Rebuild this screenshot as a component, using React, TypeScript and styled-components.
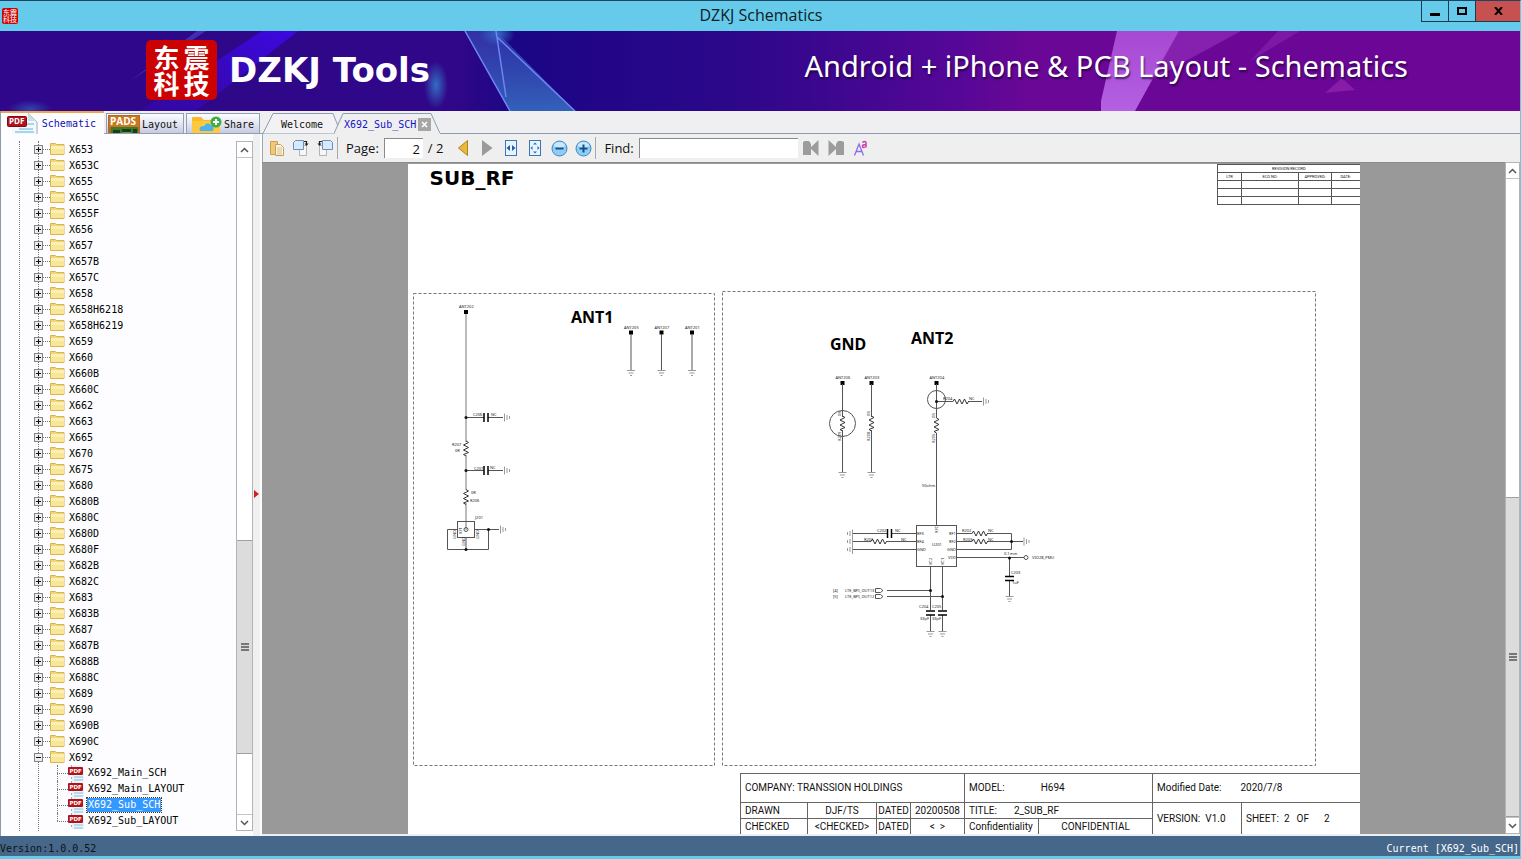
import React from "react";
import styled, { createGlobalStyle, css } from "styled-components";

const mono = `"DejaVu Sans Mono", "Liberation Mono", monospace`;
const ui = `"Open Sans", "Noto Sans", sans-serif`;
const sheetFont = `Roboto, "Noto Sans", sans-serif`;

const Global = createGlobalStyle`
  * { box-sizing: border-box; }
  html, body { margin: 0; padding: 0; overflow: hidden; }
  button, input { font: inherit; color: inherit; }
`;

const Window = styled.div`
  display: flex;
  flex-direction: column;
  height: 100vh;
  background: #66cbea;
  border-top: 1px solid #1b4560;
  border-right: 1px solid #66cbea;
  padding-bottom: 3px;
  overflow: hidden;
  font-family: ${ui};
`;

/* ---------- title bar ---------- */
const TitleBar = styled.header`
  display: grid;
  grid-template-columns: 1fr auto 1fr;
  height: 30px;
  flex: none;
  padding-left: 2px;
  color: #0d1c26;
`;
const TitleText = styled.h1`
  margin: 0;
  font-size: 16px;
  font-weight: 400;
  line-height: 28px;
`;
const WindowButtons = styled.div`
  justify-self: end;
  display: flex;
  height: 21px;
  border: 1px solid #1d3a4a;
  border-top: 0;
  border-right: 0;
`;
const WindowButton = styled.button<{ $close?: boolean }>`
  display: flex;
  align-items: center;
  justify-content: center;
  width: ${(p) => (p.$close ? 44 : 27)}px;
  padding: 0;
  border: 0;
  border-right: ${(p) => (p.$close ? "0" : "1px solid #1d3a4a")};
  background: ${(p) => (p.$close ? "#c75050" : "transparent")};
`;
const Seal = styled.div<{ $small?: boolean }>`
  position: relative;
  display: grid;
  grid-template-columns: auto auto;
  place-content: center;
  align-self: center;
  width: ${(p) => (p.$small ? 16 : 71)}px;
  height: ${(p) => (p.$small ? 16 : 60)}px;
  border-radius: ${(p) => (p.$small ? 2 : 5)}px;
  background: #cc0202;
  color: #fff;
  font-family: "Noto Sans CJK SC", sans-serif;
  font-weight: ${(p) => (p.$small ? 400 : 700)};
  font-size: ${(p) => (p.$small ? 7 : 26)}px;
  line-height: ${(p) => (p.$small ? 7 : 26)}px;
  column-gap: ${(p) => (p.$small ? 0 : 4)}px;
`;

/* ---------- banner ---------- */
const Banner = styled.div`
  position: relative;
  display: flex;
  align-items: center;
  height: 80px;
  flex: none;
  padding: 0 112px 2px 146px;
  color: #fff;
  background: linear-gradient(90deg, #2f078a 0%, #2f0788 30%, #1b0685 34%, #2c078a 48%, #3b078e 54%, #560797 63%, #6b0796 68%, #6b0696 100%);
`;
const BannerArt = styled.svg`
  position: absolute;
  inset: 0;
  width: 100%;
  height: 100%;
`;
const Brand = styled.div`
  position: relative;
  margin-left: 12px;
  font-family: "DejaVu Sans", sans-serif;
  font-size: 34px;
  line-height: 40px;
  font-weight: 700;
`;
const Slogan = styled.div`
  position: relative;
  margin-left: auto;
  padding-bottom: 8px;
  font-family: "Noto Sans", sans-serif;
  font-size: 29px;
  line-height: 36px;
  white-space: nowrap;
  text-shadow: 1px 2px 2px rgba(20, 0, 50, 0.7);
`;

/* ---------- body ---------- */
const Body = styled.div`
  display: flex;
  flex: 1;
  min-height: 0;
  background: #efeff1;
  font-family: ${mono};
`;
const Side = styled.aside`
  display: flex;
  flex-direction: column;
  width: 253px;
  flex: none;
  border-left: 1px solid #8d9bab;
`;
const SideTabs = styled.div`
  display: flex;
  align-items: flex-end;
  gap: 2px;
  width: 261px;
  height: 23px;
  flex: none;
  border-bottom: 1px solid #8fa0b5;
`;
const SideTab = styled.button<{ $active?: boolean; $w: number }>`
  display: flex;
  align-items: center;
  justify-content: space-between;
  width: ${(p) => p.$w}px;
  height: 20px;
  padding: 2px 5px 0 1px;
  overflow: hidden;
  font-size: 10px;
  border: 1px solid #8fa0b5;
  border-bottom: 0;
  background: linear-gradient(#fdfdff, #e4e6f2 50%, #c8cbdf);
  color: #111;
  ${(p) =>
    p.$active &&
    css`
      height: 23px;
      margin-bottom: -1px;
      padding: 0 8px 0 5px;
      border: 0;
      border-top: 2px solid #f0a54a;
      background: #fdfdff;
      color: #1010b4;
    `}
`;
const TreePane = styled.div`
  display: flex;
  flex: 1;
  min-height: 0;
  padding: 7px 0 5px;
  background: #fdfdff;
`;
const Tree = styled.nav`
  flex: 1;
  overflow: hidden;
  font-size: 10px;
`;
const Branch = styled.div`
  margin-left: 18px;
  border-left: 1px dotted #777;
`;
const Level = styled.ul<{ $line?: boolean }>`
  list-style: none;
  margin: 0 0 0 18px;
  padding: 0;
  ${(p) => p.$line && "border-left: 1px dotted #777;"}
`;
const Row = styled.div`
  display: flex;
  align-items: center;
  height: 16px;
  margin-left: -5px;
  white-space: nowrap;
`;
const Toggle = styled.button`
  display: block;
  width: 9px;
  height: 9px;
  padding: 0;
  border: 1px solid #848484;
  background: #ececec;
  line-height: 0;
`;
const Dots = styled.span<{ $w: number }>`
  width: ${(p) => p.$w}px;
  border-top: 1px dotted #777;
`;
const Label = styled.span`
  padding: 1px 0 0 4px;
  line-height: 15px;
  color: #000;
`;
const Leaf = styled.li<{ $last?: boolean }>`
  position: relative;
  display: flex;
  align-items: center;
  height: 16px;
  &::before {
    content: "";
    position: absolute;
    left: 0;
    top: 0;
    height: ${(p) => (p.$last ? 8 : 16)}px;
    border-left: 1px dotted #777;
  }
`;
const LeafLink = styled.a<{ $on?: boolean }>`
  margin-left: 2px;
  padding: 0 1px;
  line-height: 14px;
  color: ${(p) => (p.$on ? "#fff" : "#000")};
  background: ${(p) => (p.$on ? "#3399ff" : "transparent")};
  outline: ${(p) => (p.$on ? "1px dotted #4a3a20" : "0")};
  text-decoration: none;
  white-space: nowrap;
`;

/* ---------- scroll bars ---------- */
const Scroll = styled.div<{ $w: number }>`
  display: flex;
  flex-direction: column;
  width: ${(p) => p.$w}px;
  flex: none;
  background: #fff;
  border: 1px solid #b4b4b4;
`;
const ScrollButton = styled.button`
  display: flex;
  align-items: center;
  justify-content: center;
  height: 16px;
  flex: none;
  padding: 0;
  border: 0;
  background: #fff;
  border-bottom: 1px solid #c4c4c4;
  &:last-child { border-bottom: 0; border-top: 1px solid #c4c4c4; }
`;
const Track = styled.div<{ $grow: number }>`
  flex: ${(p) => p.$grow};
`;
const Thumb = styled.div<{ $grow: number }>`
  display: flex;
  flex-direction: column;
  align-items: center;
  justify-content: center;
  flex: ${(p) => p.$grow};
  background: #dcdcdc;
  border-top: 1px solid #a0a0a0;
  border-bottom: 1px solid #a0a0a0;
`;
const Splitter = styled.div`
  display: flex;
  align-items: center;
  width: 9px;
  flex: none;
  margin-top: 23px;
  padding: 18px 0 0 1px;
  background: #eff0f2;
  border-right: 2px solid #fcfcfc;
`;

/* ---------- document area ---------- */
const Main = styled.main`
  display: flex;
  flex-direction: column;
  flex: 1;
  min-width: 0;
`;
const DocTabs = styled.div`
  display: flex;
  align-items: flex-end;
  height: 23px;
  flex: none;
  border-bottom: 1px solid #8b9dae;
`;
const DocTab = styled.div<{ $w: number; $active?: boolean }>`
  position: relative;
  display: flex;
  align-items: center;
  width: ${(p) => p.$w}px;
  height: 21px;
  margin-bottom: -1px;
  margin-left: ${(p) => (p.$active ? -8 : 0)}px;
  padding: 2px 0 0 ${(p) => (p.$active ? 10 : 19)}px;
  font-size: 10px;
  color: ${(p) => (p.$active ? "#1414c8" : "#111")};
  & > svg { position: absolute; left: 0; top: 0; }
`;
const TabName = styled.button`
  position: relative;
  padding: 0;
  border: 0;
  background: none;
`;
const TabClose = styled.button`
  position: relative;
  display: flex;
  align-items: center;
  justify-content: center;
  width: 13px;
  height: 13px;
  margin-left: 2px;
  padding: 0;
  border: 0;
  background: #a6a6a6;
`;
const Toolbar = styled.div`
  display: flex;
  align-items: center;
  height: 28px;
  flex: none;
  padding-left: 2px;
  background: #efefef;
  border-left: 1px solid #a0a8b0;
  font-family: ${ui};
  font-size: 13px;
  color: #111;
`;
const Tool = styled.button`
  display: flex;
  align-items: center;
  justify-content: center;
  width: 24px;
  height: 22px;
  flex: none;
  padding: 0;
  border: 0;
  background: none;
`;
const Divider = styled.span`
  width: 1px;
  height: 22px;
  margin-right: 8px;
  background: #a8a8a8;
`;
const Field = styled.input<{ $w: number }>`
  width: ${(p) => p.$w}px;
  height: 20px;
  margin: 0 5px;
  padding: 0 3px 0 2px;
  border: 0;
  border-top: 1px solid #8a8a8a;
  border-left: 1px solid #8a8a8a;
  background: #fff;
  text-align: right;
`;
const Tools = styled.div`
  display: flex;
  margin-left: 8px;
`;
const FindTools = styled.div`
  display: flex;
  gap: 1px;
  margin-left: -4px;
`;
const Viewer = styled.div`
  display: flex;
  flex: 1;
  min-height: 0;
  margin-bottom: 2px;
  background: #999;
`;
const Canvas = styled.div`
  flex: 1;
  min-width: 0;
  padding-top: 1px;
  border-top: 1px solid #8c8c8c;
  overflow: hidden;
`;
const Sheet = styled.article`
  width: 952px;
  height: 100%;
  margin: 0 auto;
  background: #fff;
  overflow: hidden;
  font-family: ${sheetFont};
  color: #111;
`;
const SheetHead = styled.div`
  display: flex;
  justify-content: space-between;
  align-items: flex-start;
  height: 127px;
  padding-left: 22px;
`;
const SheetTitle = styled.h2`
  margin: 0;
  font: 700 20px/28px "DejaVu Sans", sans-serif;
  color: #000;
`;
const Revision = styled.table`
  width: 142px;
  border-collapse: collapse;
  table-layout: fixed;
  font-size: 4px;
  line-height: 7px;
  text-align: center;
  td, th {
    height: 8px;
    padding: 0;
    font-weight: 400;
    border: 1px solid #555;
    border-right-width: 0;
  }
`;
const Frames = styled.div`
  display: flex;
  align-items: flex-end;
  gap: 7px;
  padding-left: 5px;
`;
const Drawing = styled.svg`
  display: block;
  flex: none;
`;
const TitleBlock = styled.table`
  width: 619px;
  margin: 7px 0 0 auto;
  border-collapse: collapse;
  table-layout: fixed;
  font-size: 10px;
  line-height: 14px;
  text-align: left;
  td {
    height: 16px;
    padding: 0 0 0 4px;
    border: 1px solid #666;
    border-right-width: 0;
    white-space: nowrap;
    overflow: hidden;
  }
  tr:first-child td { height: 29px; }
`;
const CenterCell = styled.td`
  && { padding: 0; text-align: center; }
`;
const Gap = styled.span<{ $w: number }>`
  display: inline-block;
  width: ${(p) => p.$w}px;
`;
const Status = styled.footer`
  display: flex;
  justify-content: space-between;
  align-items: flex-end;
  height: 20px;
  flex: none;
  padding: 0 1px 0 0;
  background: #44678a;
  font: 10px/14px ${mono};
  color: #111;
`;
const Current = styled.span`
  color: #fff;
`;

/* ---------- icons ---------- */
const Folder = () => (
  <svg width="15" height="14" viewBox="0 0 15 14">
    <path d="M.5 1.500h5l1 1h7.500v10H.5z" fill="#f3d775" stroke="#d9b452" />
    <path d="M1 4h13v8H1z" fill="#fae694" />
    <path d="M1 4h13v3H1z" fill="#fdf0b4" />
  </svg>
);
const PdfIcon = () => (
  <svg width="17" height="16" viewBox="0 0 17 16">
    <path d="M4 0h8l4 4v12H4z" fill="#e9f3f8" />
    <path d="M3.500 0v16" stroke="#9ab" strokeDasharray="2 2" />
    <path d="M6 12h9M6 15h9" stroke="#a5d4ea" strokeWidth="1.500" />
    <rect x="0" y="2" width="15" height="8" rx="1" fill="#b3121d" />
    <text x="1.500" y="8" fontSize="5.500" fontWeight="700" fill="#fff" fontFamily="DejaVu Sans">PDF</text>
  </svg>
);
const BigPdf = () => (
  <svg width="33" height="21" viewBox="0 0 33 21">
    <path d="M6 0h16l8 8v13H6z" fill="#f2f8fc" />
    <path d="M22 0l9 9v12" fill="none" stroke="#8eaec0" />
    <path d="M22 0v8h8z" fill="#c9dfe9" />
    <path d="M13 16h14M9 19h19M21 11h7" stroke="#a9d5ec" strokeWidth="2" />
    <rect x="1.500" y="3.500" width="19" height="10" rx="1" fill="#b3121d" stroke="#7d0c14" />
    <text x="3" y="11" fontSize="8" fontWeight="700" fill="#fff" fontFamily="Open Sans">PDF</text>
  </svg>
);
const PadsIcon = () => (
  <svg width="32" height="19" viewBox="0 0 32 19">
    <rect width="32" height="19" fill="#b9671c" />
    <rect x="1" y="1" width="30" height="11" fill="#c97820" />
    <text x="2" y="10" fontSize="10" fontWeight="700" fill="#fff" fontFamily="Open Sans">PADS</text>
    <path d="M3 12h27v7H3z" fill="#3d7a25" />
    <path d="M5 15h7v4H5zM14 14h9v3h-9zM25 14h4v5h-4z" fill="#1d3a20" />
    <path d="M14 18h9" stroke="#7cc04a" />
  </svg>
);
const ShareIcon = () => (
  <svg width="34" height="18" viewBox="0 0 34 18">
    <path d="M4 2q0-1 1-1h8l3 3h14v14H4z" fill="#fbb92a" />
    <path d="M4 5h28v13H4z" fill="#ffc93f" />
    <path d="M12 15q-2-5 4-5 3-5 7-1 4 1 2 6z" fill="#4db3ec" />
    <circle cx="28" cy="6" r="5.500" fill="#3fae49" />
    <path d="M28 3v6M25 6h6" stroke="#fff" strokeWidth="2" />
  </svg>
);
const Chevron = ({ up }: { up?: boolean }) => (
  <svg width="9" height="6" viewBox="0 0 9 6">
    <path d={up ? "M1 5l3.500-3.500L8 5" : "M1 1l3.500 3.500L8 1"} fill="none" stroke="#555" strokeWidth="1.500" />
  </svg>
);
const Grip = () => (
  <svg width="8" height="8" viewBox="0 0 8 8">
    <path d="M0 1h8M0 4h8M0 7h8" stroke="#555" strokeWidth="1.500" />
  </svg>
);
const CopyIcon = () => (
  <svg width="17" height="17" viewBox="0 0 17 17">
    <path d="M1.500 1.500h7v13h-7z" fill="#f0c878" stroke="#cfa04c" />
    <path d="M6.500 4.500h5l3 3v8h-8z" fill="#fff6e0" stroke="#c79f58" />
    <path d="M8 8h5M8 10h5M8 12h5M8 14h5" stroke="#b9a67c" strokeWidth=".7" />
  </svg>
);
const RotateIcon = ({ left }: { left?: boolean }) => (
  <svg width="18" height="18" viewBox="0 0 18 18">
    <g transform={left ? "matrix(-1 0 0 1 18 0)" : undefined}>
      <path d="M7.500 6.500h7v10h-7z" fill="#f7f7f7" stroke="#b4b4b4" />
      <path d="M1.500 3.500l2-2h8v9h-10z" fill="#d6eafb" stroke="#6a90b8" />
      <path d="M12 2.500h2.500V5" fill="none" stroke="#222" strokeWidth="1.200" />
      <path d="M12.500 4.500h4L14.500 7z" fill="#222" />
    </g>
  </svg>
);
const FitIcon = ({ page }: { page?: boolean }) => (
  <svg width="14" height="16" viewBox="0 0 14 16">
    <rect x="1.500" y=".5" width="11" height="15" fill="#e8f4ff" stroke="#3c74b8" />
    {page ? (
      <path d="M7 2.500l2 2H5zM7 13.500l2-2H5zM2.500 8l2-2v4zM11.500 8l-2-2v4z" fill="#2b6cb5" />
    ) : (
      <path d="M2.500 8L6 5v6zM11.500 8L8 5v6z" fill="#1d5fae" />
    )}
  </svg>
);
const ZoomIcon = ({ plus }: { plus?: boolean }) => (
  <svg width="17" height="17" viewBox="0 0 17 17">
    <circle cx="8.500" cy="8.500" r="7.500" fill="#8fcdf5" stroke="#3e87c4" />
    <ellipse cx="8.500" cy="5" rx="5.500" ry="3" fill="#c9e8fc" />
    <path d={plus ? "M4.500 8.500h8M8.500 4.500v8" : "M4.500 8.500h8"} stroke="#10508f" strokeWidth="2" />
  </svg>
);
const ArrowIcon = ({ back }: { back?: boolean }) => (
  <svg width="12" height="18" viewBox="0 0 12 18">
    {back ? (
      <path d="M10.500 1.500v15L1.500 9z" fill="#e9b93b" stroke="#b5811b" />
    ) : (
      <path d="M1 1v16L11.500 9z" fill="#9a9a9a" />
    )}
  </svg>
);
const FindIcon = ({ next }: { next?: boolean }) => (
  <svg width="16" height="16" viewBox="0 0 16 16">
    <g transform={next ? "matrix(-1 0 0 1 16 0)" : undefined} fill="#9c9c9c">
      <path d="M0 2l2-1h4l2 3v11H0z" />
      <path d="M15.500 0v16L7 8z" />
    </g>
  </svg>
);
const CaseIcon = () => (
  <svg width="16" height="18" viewBox="0 0 16 18">
    <path d="M1.500 16.500L6 5l4.500 11.500M3 12.500h6" fill="none" stroke="#8a6ee8" strokeWidth="1.300" />
    <path d="M9.500 3.500q2-2 3.500 0v5M13 5.500q-4 0-3.500 2t3.500 0" fill="none" stroke="#cf3fa8" strokeWidth="1.500" />
  </svg>
);

/* ---------- schematic symbols ---------- */
const line = { fill: "none", stroke: "#555", strokeWidth: 1 };
const T = ({ x, y, children, v }: { x: number; y: number; children: string; v?: boolean }) => (
  <text x={x} y={y} fontSize="4" fill="#222" fontFamily="Noto Sans" transform={v ? `rotate(-90 ${x} ${y})` : undefined}>
    {children}
  </text>
);
const Heading = ({ x, y, children }: { x: number; y: number; children: string }) => (
  <text x={x} y={y} fontSize="16" fontWeight="700" fill="#000" fontFamily="Noto Sans">{children}</text>
);
const Pin = ({ x, y, name }: { x: number; y: number; name: string }) => (
  <g>
    <rect x={x - 2} y={y} width="4" height="4" fill="#000" />
    <T x={x - 7} y={y - 2}>{name}</T>
  </g>
);
const Earth = ({ x, y }: { x: number; y: number }) => (
  <path d={`M${x - 4} ${y}h8M${x - 2.5} ${y + 2.5}h5M${x - 1} ${y + 5}h2`} {...line} stroke="#999" />
);
const SideEarth = ({ x, y, flip }: { x: number; y: number; flip?: boolean }) => {
  const d = flip ? -1 : 1;
  return <path d={`M${x} ${y - 4}v8M${x + 2.5 * d} ${y - 2.5}v5M${x + 5 * d} ${y - 1.5}v3`} {...line} stroke="#999" />;
};
const ResV = ({ x, y }: { x: number; y: number }) => (
  <path d={`M${x} ${y}l2.500 1.500l-5 2.500l5 2.500l-5 2.500l5 2.500l-5 2l2.500 1.500`} {...line} stroke="#333" />
);
const ResH = ({ x, y }: { x: number; y: number }) => (
  <path d={`M${x} ${y}l1.500-2.500l2.500 5l2.500-5l2.500 5l2.500-5l2.500 5l1.500-2.500`} {...line} stroke="#333" />
);
const CapH = ({ x, y }: { x: number; y: number }) => (
  <path d={`M${x - 2} ${y - 4.5}v9M${x + 2} ${y - 4.5}v9`} stroke="#000" strokeWidth="1.500" />
);
const CapV = ({ x, y }: { x: number; y: number }) => (
  <path d={`M${x - 4.5} ${y - 2}h9M${x - 4.5} ${y + 2}h9`} stroke="#000" strokeWidth="1.500" />
);
const Dot = ({ x, y }: { x: number; y: number }) => <circle cx={x} cy={y} r="1.500" fill="#111" />;

const Antenna1 = () => (
  <Drawing width="302" height="473" viewBox="413 293 302 473">
    <rect x="413.500" y="293.500" width="301" height="472" {...line} stroke="#777" strokeDasharray="3 2" />
    <Heading x={571} y={323}>ANT1</Heading>
    <Pin x={466} y={310} name="ANT202" />
    <path d="M466 314v128M466 455v35M466 503v27" {...line} stroke="#777" />
    <path d="M466 417.500h18M488 417.500h15M466 470.500h18M488 470.500h15" {...line} />
    <CapH x={486} y={417.5} />
    <CapH x={486} y={470.5} />
    <SideEarth x={504.5} y={417.5} />
    <SideEarth x={504.5} y={470.5} />
    <Dot x={466} y={417.5} />
    <Dot x={466} y={470.5} />
    <T x={473} y={416}>C206</T>
    <T x={491} y={416}>NC</T>
    <T x={474} y={470}>C207</T>
    <T x={490} y={469}>NC</T>
    <ResV x={466} y={441} />
    <ResV x={466} y={489.5} />
    <T x={452} y={446}>R207</T>
    <T x={455} y={452}>0R</T>
    <T x={471} y={494}>0R</T>
    <T x={470} y={502}>R206</T>
    <T x={475} y={519}>J201</T>
    <rect x="457.500" y="521.500" width="17" height="16" {...line} />
    <circle cx="466" cy="529.500" r="2" {...line} />
    <path d="M457 529.500h-9.500v20h41v-20M474 529.500h25M466 537v12" {...line} />
    <SideEarth x={500.5} y={529.5} />
    <Dot x={488.500} y={529.5} />
    <Dot x={466} y={549.500} />
    <T x={456} y={539} v>GND</T>
    <T x={479} y={539} v>GND</T>
    <T x={465} y={546} v>GND</T>
    <T x={462} y={534} v>RF1</T>
    {[["ANT205", 631], ["ANT207", 661.5], ["ANT201", 692]].map(([name, x]) => (
      <g key={name}>
        <Pin x={x as number} y={330.5} name={name as string} />
        <path d={`M${x} 334v36`} {...line} />
        <Earth x={x as number} y={370.5} />
      </g>
    ))}
  </Drawing>
);

const Antenna2 = () => (
  <Drawing width="594" height="475" viewBox="722 291 594 475">
    <rect x="722.500" y="291.500" width="593" height="474" {...line} stroke="#777" strokeDasharray="3 2" />
    <Heading x={830} y={350}>GND</Heading>
    <Heading x={911} y={344}>ANT2</Heading>
    <Pin x={842.500} y={381} name="ANT206" />
    <Pin x={871.500} y={381} name="ANT203" />
    <Pin x={936.500} y={381} name="ANT204" />
    <path d="M842.500 384v33M842.500 430v42M871.500 384v33M871.500 430v42M936.500 384v34M936.500 433v92" {...line} />
    <ResV x={842.500} y={416} />
    <ResV x={871.500} y={416} />
    <ResV x={936.500} y={418} />
    <circle cx="842.500" cy="423.500" r="13" {...line} />
    <circle cx="936.500" cy="399.500" r="9" {...line} />
    <Earth x={842.500} y={472.5} />
    <Earth x={871.500} y={472.5} />
    <T x={841} y={416} v>0R</T>
    <T x={841} y={441} v>R209</T>
    <T x={870} y={416} v>0R</T>
    <T x={870} y={441} v>R208</T>
    <T x={935} y={418} v>0R</T>
    <T x={935} y={443} v>R205</T>
    <path d="M936 401.500h17M968 401.500h14" {...line} />
    <ResH x={953} y={401.500} />
    <Dot x={936.500} y={401.500} />
    <SideEarth x={983.500} y={401.500} />
    <T x={943} y={400}>R204</T>
    <T x={969} y={400}>NC</T>
    <T x={922} y={487}>50ohm</T>
    <rect x="916.500" y="525.500" width="40" height="41" {...line} />
    <path d="M916 533.500h-25M887 533.500h-34M916 541.500h-30M871 541.500h-18M916 549.500h-63" {...line} />
    <CapH x={889.5} y={533.5} />
    <ResH x={871} y={541.5} />
    {[533.5, 541.5, 549.5].map((y) => <SideEarth key={y} x={852.500} y={y} flip />)}
    <path d="M852.500 530v24" {...line} stroke="#999" />
    <T x={877} y={532}>C202</T>
    <T x={895} y={532}>NC</T>
    <T x={864} y={541}>R201</T>
    <T x={901} y={541}>NC</T>
    <T x={917} y={535}>RF3</T>
    <T x={917} y={543}>RF4</T>
    <T x={917} y={551}>GND</T>
    <T x={949} y={535}>RF1</T>
    <T x={949} y={543}>RF2</T>
    <T x={947} y={551}>GND</T>
    <T x={948} y={559}>VDD</T>
    <T x={932} y={546}>U201</T>
    <T x={938} y={533} v>RFC</T>
    <T x={932} y={565} v>VC2</T>
    <T x={944} y={565} v>VC1</T>
    <path d="M957 533.500h15M987 533.500h24.500v16H957M957 541.500h15M987 541.500h36" {...line} />
    <ResH x={972} y={533.5} />
    <ResH x={972} y={541.5} />
    <Dot x={1011.5} y={541.5} />
    <SideEarth x={1024} y={541.5} />
    <T x={962} y={532}>R202</T>
    <T x={988} y={532}>NC</T>
    <T x={963} y={541}>R203</T>
    <T x={988} y={541}>NC</T>
    <path d="M957 557.500h67M1009.500 557v19M1009.500 580v16" {...line} />
    <circle cx="1026" cy="557.500" r="2" {...line} />
    <Dot x={1009.500} y={558} />
    <CapV x={1009.500} y={578.5} />
    <Earth x={1009.500} y={596.5} />
    <T x={1004} y={555}>0.1mm</T>
    <T x={1032} y={559}>VIO28_PMU</T>
    <T x={1011} y={574}>C203</T>
    <T x={1012} y={584}>1uF</T>
    <path d="M930.500 567v43M942.500 567v43M930.500 615v17M942.500 615v17M887 590.500h43M887 596.500h55" {...line} />
    <path d="M875.500 588.500h5l2.500 2l-2.500 2h-5zM875.500 594.500h5l2.500 2l-2.500 2h-5z" {...line} />
    <Dot x={930.500} y={590.500} />
    <Dot x={942.500} y={596.500} />
    <CapV x={930.500} y={613} />
    <CapV x={942.500} y={613} />
    <Earth x={930.500} y={631.5} />
    <Earth x={942.500} y={631.5} />
    <T x={833} y={592}>[4]</T>
    <T x={833} y={598}>[5]</T>
    <T x={845} y={592}>LTE_BPI_OUT13</T>
    <T x={845} y={598}>LTE_BPI_OUT12</T>
    <T x={919} y={608}>C204</T>
    <T x={932} y={608}>C205</T>
    <T x={920} y={620}>33pF</T>
    <T x={932} y={620}>33pF</T>
  </Drawing>
);

const models = (
  "X653 X653C X655 X655C X655F X656 X657 X657B X657C X658 X658H6218 X658H6219 X659 X660 X660B X660C X662 X663 X665 X670 " +
  "X675 X680 X680B X680C X680D X680F X682B X682C X683 X683B X687 X687B X688B X688C X689 X690 X690B X690C X692"
).split(" ");
const files = ["X692_Main_SCH", "X692_Main_LAYOUT", "X692_Sub_SCH", "X692_Sub_LAYOUT"];

const SealMark = ({ small }: { small?: boolean }) => (
  <Seal $small={small}>
    <span>东</span>
    <span>震</span>
    <span>科</span>
    <span>技</span>
  </Seal>
);

export default function App() {
  return (
    <Window>
      <Global />
      <TitleBar>
        <SealMark small />
        <TitleText>DZKJ Schematics</TitleText>
        <WindowButtons>
          <WindowButton aria-label="Minimize">
            <svg width="10" height="10"><path d="M0 8.500h10" stroke="#000" strokeWidth="3" /></svg>
          </WindowButton>
          <WindowButton aria-label="Maximize">
            <svg width="10" height="8"><rect x="1" y="1" width="8" height="6" fill="none" stroke="#000" strokeWidth="2" /></svg>
          </WindowButton>
          <WindowButton $close aria-label="Close">
            <svg width="9" height="8" viewBox="0 0 9 8"><path d="M1 0l7 8M8 0L1 8" stroke="#000" strokeWidth="2" /></svg>
          </WindowButton>
        </WindowButtons>
      </TitleBar>

      <Banner>
        <BannerArt viewBox="0 0 1520 80" preserveAspectRatio="none">
          <defs>
            <linearGradient id="beam" x1="0" y1="1" x2="1" y2="0">
              <stop offset="0" stopColor="#3a0ad0" stopOpacity="0.300" />
              <stop offset="1" stopColor="#3c08e0" />
            </linearGradient>
            <linearGradient id="shard" x1="0" y1="0" x2="0" y2="1">
              <stop offset="0" stopColor="#3c55c0" stopOpacity="0.700" />
              <stop offset="1" stopColor="#3a7fcb" />
            </linearGradient>
            <linearGradient id="pink" x1="0" y1="0" x2="0" y2="1">
              <stop offset="0" stopColor="#b254dc" />
              <stop offset="1" stopColor="#c070f0" />
            </linearGradient>
            <radialGradient id="glow">
              <stop offset="0" stopColor="#3478c8" stopOpacity="0.900" />
              <stop offset="1" stopColor="#3478c8" stopOpacity="0" />
            </radialGradient>
          </defs>
          <path d="M262 0h36L196 80H140z" fill="url(#beam)" />
          <path d="M197 0h9L130 50z" fill="#5a50d8" opacity="0.500" />
          <ellipse cx="30" cy="78" rx="22" ry="9" fill="url(#glow)" opacity="0.600" />
          <ellipse cx="436" cy="54" rx="12" ry="24" fill="url(#glow)" />
          <ellipse cx="497" cy="3" rx="18" ry="12" fill="url(#glow)" />
          <path d="M465 0h31l79 80h-65z" fill="url(#shard)" opacity="0.750" />
          <path d="M465 0l45 80M496 0l10 66M497 6l78 74" fill="none" stroke="#6d86f5" strokeWidth="1.500" />
          <path d="M1117 0h62l-44 80h-34v-10z" fill="url(#pink)" opacity="0.850" />
          <path d="M1179 0h62l-92 50z" fill="#9b35c4" opacity="0.550" />
          <path d="M1278 0h22l-50 30z" fill="#8b2bb5" opacity="0.500" />
          <path d="M1342 47l13 12l-30 3z" fill="#9226ae" opacity="0.700" />
        </BannerArt>
        <SealMark />
        <Brand>DZKJ Tools</Brand>
        <Slogan>Android + iPhone &amp; PCB Layout - Schematics</Slogan>
      </Banner>

      <Body>
        <Side>
          <SideTabs>
            <SideTab $w={103} $active><BigPdf />Schematic</SideTab>
            <SideTab $w={78}><PadsIcon />Layout</SideTab>
            <SideTab $w={74}><ShareIcon />Share</SideTab>
          </SideTabs>
          <TreePane>
            <Tree aria-label="Models">
              <Branch>
                <Level $line>
                  {models.map((m, i) => {
                    const open = i === models.length - 1;
                    return (
                      <li key={m}>
                        <Row>
                          <Toggle aria-label={open ? "Collapse " + m : "Expand " + m}>
                            <svg width="7" height="7"><path d={open ? "M1 3.500h5" : "M1 3.500h5M3.500 1v5"} stroke="#111" /></svg>
                          </Toggle>
                          <Dots $w={7} />
                          <Folder />
                          <Label>{m}</Label>
                        </Row>
                        {open && (
                          <Level>
                            {files.map((f, j) => (
                              <Leaf key={f} $last={j === 3}>
                                <Dots $w={11} />
                                <PdfIcon />
                                <LeafLink href="#" $on={j === 2}>{f}</LeafLink>
                              </Leaf>
                            ))}
                          </Level>
                        )}
                      </li>
                    );
                  })}
                  <li><Row><Gap $w={16} /><Folder /></Row></li>
                </Level>
              </Branch>
            </Tree>
            <Scroll $w={17}>
              <ScrollButton aria-label="Scroll up"><Chevron up /></ScrollButton>
              <Track $grow={384} />
              <Thumb $grow={214}><Grip /></Thumb>
              <Track $grow={60} />
              <ScrollButton aria-label="Scroll down"><Chevron /></ScrollButton>
            </Scroll>
          </TreePane>
        </Side>
        <Splitter>
          <svg width="5" height="8"><path d="M0 0l5 4l-5 4z" fill="#d02020" /></svg>
        </Splitter>

        <Main>
          <DocTabs>
            <DocTab $w={80}>
              <svg width="80" height="21"><path d="M1 20.500L11 .5h60l8 20" fill="#f2f2f4" stroke="#8b9dae" /></svg>
              <TabName>Welcome</TabName>
            </DocTab>
            <DocTab $w={108} $active>
              <svg width="108" height="21"><path d="M0 20.500L9 .5h88l9 20" fill="#efefef" stroke="#8b9dae" /><path d="M1 20.500h105" stroke="#efefef" /></svg>
              <TabName>X692_Sub_SCH</TabName>
              <TabClose aria-label="Close tab">
                <svg width="7" height="7"><path d="M1 1l5 5M6 1L1 6" stroke="#fff" strokeWidth="1.500" /></svg>
              </TabClose>
            </DocTab>
          </DocTabs>
          <Toolbar>
            <Tool aria-label="Copy"><CopyIcon /></Tool>
            <Tool aria-label="Rotate right"><RotateIcon /></Tool>
            <Tool aria-label="Rotate left"><RotateIcon left /></Tool>
            <Divider />
            <label htmlFor="page">Page:</label>
            <Field id="page" $w={39} defaultValue="2" />
            <span>/ 2</span>
            <Tools>
              <Tool aria-label="Previous page"><ArrowIcon back /></Tool>
              <Tool aria-label="Next page"><ArrowIcon /></Tool>
              <Tool aria-label="Fit width"><FitIcon /></Tool>
              <Tool aria-label="Fit page"><FitIcon page /></Tool>
              <Tool aria-label="Zoom out"><ZoomIcon /></Tool>
              <Tool aria-label="Zoom in"><ZoomIcon plus /></Tool>
            </Tools>
            <Divider />
            <label htmlFor="find">Find:</label>
            <Field id="find" $w={159} />
            <FindTools>
              <Tool aria-label="Find previous"><FindIcon /></Tool>
              <Tool aria-label="Find next"><FindIcon next /></Tool>
              <Tool aria-label="Match case"><CaseIcon /></Tool>
            </FindTools>
          </Toolbar>
          <Viewer>
            <Canvas>
              <Sheet>
                <SheetHead>
                  <SheetTitle>SUB_RF</SheetTitle>
                  <Revision>
                    <colgroup><col width="24" /><col width="57" /><col width="33" /><col width="28" /></colgroup>
                    <tbody>
                      <tr><th colSpan={4}>REVISION RECORD</th></tr>
                      <tr><th>LTR</th><th>ECO NO:</th><th>APPROVED:</th><th>DATE:</th></tr>
                      {[0, 1, 2].map((r) => <tr key={r}><td /><td /><td /><td /></tr>)}
                    </tbody>
                  </Revision>
                </SheetHead>
                <Frames>
                  <Antenna1 />
                  <Antenna2 />
                </Frames>
                <TitleBlock>
                  <colgroup>
                    <col width="67" /><col width="69" /><col width="34" /><col width="54" />
                    <col width="74" /><col width="114" /><col width="89" /><col width="118" />
                  </colgroup>
                  <tbody>
                    <tr>
                      <td colSpan={4}>COMPANY: TRANSSION HOLDINGS</td>
                      <td colSpan={2}>MODEL:<Gap $w={36} />H694</td>
                      <td colSpan={2}>Modified Date:<Gap $w={19} />2020/7/8</td>
                    </tr>
                    <tr>
                      <td>DRAWN</td>
                      <CenterCell>DJF/TS</CenterCell>
                      <CenterCell>DATED</CenterCell>
                      <CenterCell>20200508</CenterCell>
                      <td colSpan={2}>TITLE:<Gap $w={17} />2_SUB_RF</td>
                      <td rowSpan={2}>VERSION:<Gap $w={5} />V1.0</td>
                      <td rowSpan={2}>SHEET:<Gap $w={5} />2<Gap $w={7} />OF<Gap $w={15} />2</td>
                    </tr>
                    <tr>
                      <td>CHECKED</td>
                      <CenterCell>&lt;CHECKED&gt;</CenterCell>
                      <CenterCell>DATED</CenterCell>
                      <CenterCell>&lt;&nbsp; &gt;</CenterCell>
                      <td>Confidentiality</td>
                      <CenterCell>CONFIDENTIAL</CenterCell>
                    </tr>
                  </tbody>
                </TitleBlock>
              </Sheet>
            </Canvas>
            <Scroll $w={15}>
              <ScrollButton aria-label="Scroll up"><Chevron up /></ScrollButton>
              <Track $grow={320} />
              <Thumb $grow={321}><Grip /></Thumb>
              <ScrollButton aria-label="Scroll down"><Chevron /></ScrollButton>
            </Scroll>
          </Viewer>
        </Main>
      </Body>
      <Status>
        <span>Version:1.0.0.52</span>
        <Current>Current [X692_Sub_SCH]</Current>
      </Status>
    </Window>
  );
}
